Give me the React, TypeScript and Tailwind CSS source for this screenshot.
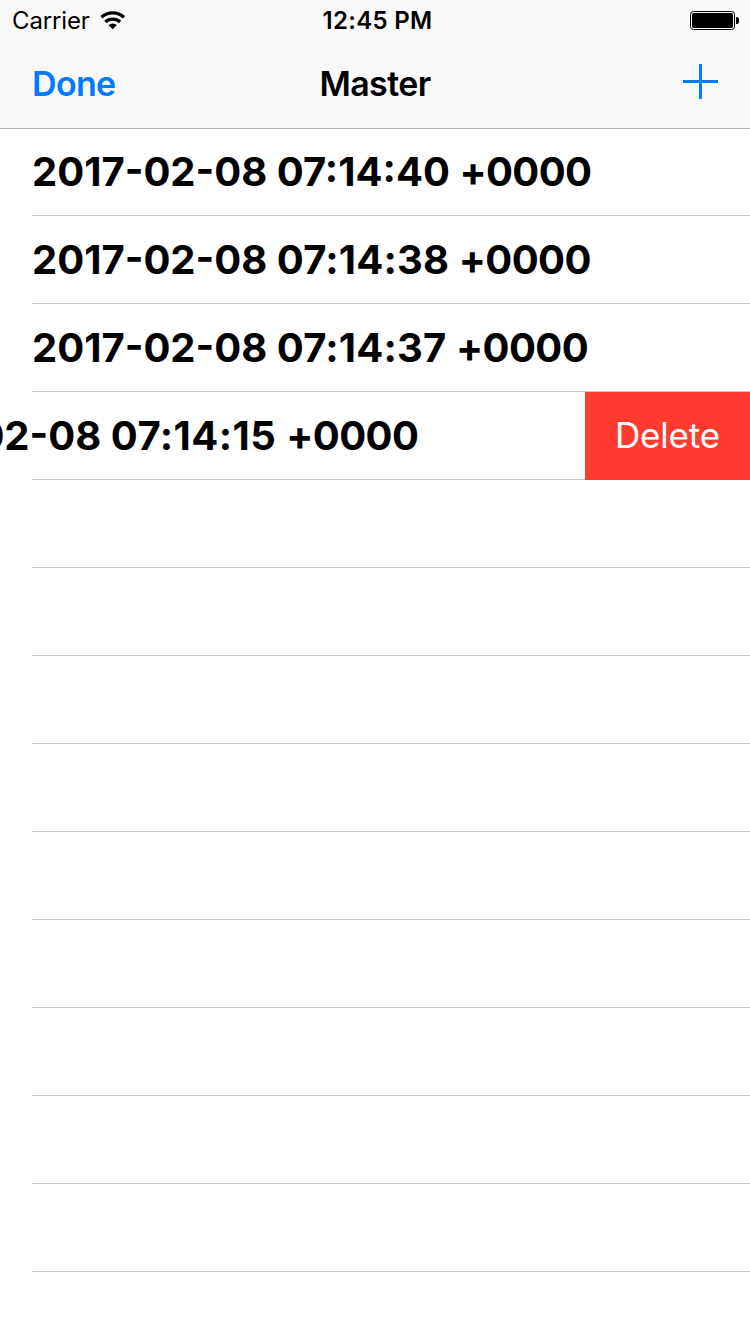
import React from "react";

const rows = [
  { date: "2017-02-08", time: "07:14:40", timeClass: "tracking-normal" },
  { date: "2017-02-08", time: "07:14:38", timeClass: "tracking-[0.17px]" },
  { date: "2017-02-08", time: "07:14:37", timeClass: "tracking-[0.17px]" },
];

const emptyRows = Array.from({ length: 9 }, (_, i) => i);

function Timestamp({ date, time, timeClass }: { date: string; time: string; timeClass: string }) {
  return (
    <span>
      {date} <span className={timeClass}>{time} </span>
      <span className="tracking-[-0.6px]">+0000</span>
    </span>
  );
}

function StatusBar() {
  return (
    <div className="grid h-10 grid-cols-3 items-center pr-[11px] pl-3 text-2xl leading-10">
      <div className="flex items-center gap-2.5">
        <span className="pt-px tracking-[-0.15px] whitespace-nowrap">Carrier</span>
        <svg width="26" height="19" viewBox="0 0 26 19" fill="none" stroke="#000" strokeWidth="3.3">
          <path d="M1.4 6.2a16.8 16.8 0 0 1 22.6 0" />
          <path d="M5.4 11a10.7 10.7 0 0 1 14.6 0" />
          <path d="M12.7 18.3l-4.2-4.2a6 6 0 0 1 8.4 0z" fill="#000" stroke="none" />
        </svg>
      </div>
      <span className="pt-px pl-1 text-center font-semibold tracking-[0.3px]">12:45 PM</span>
      <svg className="justify-self-end" width="49" height="19" viewBox="0 0 49 19">
        <rect x="0.5" y="0.5" width="44" height="18" rx="3" fill="none" stroke="#000" />
        <rect x="2" y="2" width="41" height="15" rx="1.8" />
        <path d="M46 6h.5a2.5 2.5 0 0 1 2.5 2.5v2a2.5 2.5 0 0 1-2.5 2.5h-.5z" />
      </svg>
    </div>
  );
}

function NavigationBar() {
  return (
    <div className="grid h-[88px] grid-cols-3 items-center px-8 text-[34px] leading-[51px]">
      <button className="mb-px justify-self-start font-semibold tracking-[-0.65px] text-[#007aff]">Done</button>
      <h1 className="mb-px text-center font-semibold tracking-[-0.6px]">Master</h1>
      <svg className="mb-[5px] justify-self-end" width="35" height="35" viewBox="0 0 35 35" fill="#007aff" shapeRendering="crispEdges">
        <rect y="16" width="35" height="3" />
        <rect x="16" width="3" height="35" />
      </svg>
    </div>
  );
}

export default function App() {
  return (
    <div className="flex h-[1334px] w-[750px] flex-col overflow-hidden bg-white font-['Inter',sans-serif] text-black">
      <header className="flex h-[129px] shrink-0 flex-col border-b border-[#b2b2b2] bg-[#f9f9f9]">
        <StatusBar />
        <NavigationBar />
      </header>
      <main className="-mt-px">
        <ul className="text-[40px] leading-[60px] font-bold whitespace-nowrap">
          {rows.map((row) => (
            <li key={row.time} className="ml-8 flex h-[88px] items-center border-b border-[#c8c8c8] pt-px">
              <Timestamp {...row} />
            </li>
          ))}
          <li className="ml-8 flex h-[88px] items-center border-b border-[#c8c8c8]">
            <div className="-ml-[166px] pt-px">
              <Timestamp date="2017-02-08" time="07:14:15" timeClass="tracking-[0.45px]" />
            </div>
            <button className="-mb-px ml-auto h-[88px] w-[165px] self-start bg-[#ff3b30] pb-0.5 text-[35px] leading-[42px] font-normal tracking-[-0.2px] text-white">
              Delete
            </button>
          </li>
          {emptyRows.map((row) => (
            <li key={row} className="ml-8 h-[88px] border-b border-[#c8c8c8]" />
          ))}
        </ul>
      </main>
    </div>
  );
}
